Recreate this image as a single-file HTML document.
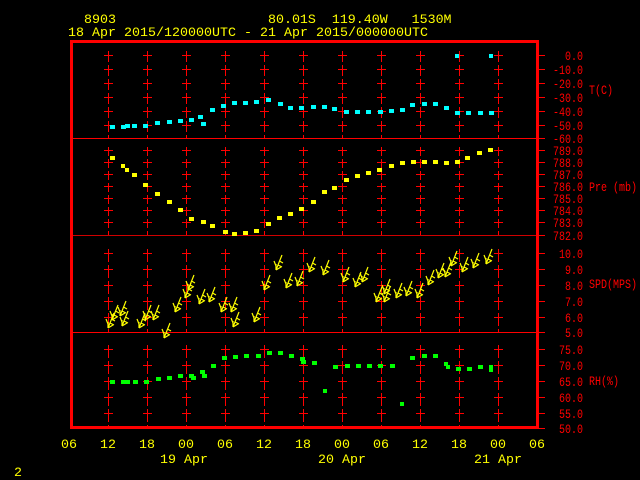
<!DOCTYPE html>
<html><head><meta charset="utf-8"><style>
html,body{margin:0;padding:0;background:#000;}
svg{display:block}
text{font-family:"Liberation Mono",monospace;font-size:13.3px}
.s{font-size:13px}
</style></head><body>
<svg width="640" height="480" viewBox="0 0 640 480" xmlns="http://www.w3.org/2000/svg">
<defs>
<g id="b" stroke="#ffff00" stroke-width="1.2" fill="none">
<path d="M0,0 L6,-15 M0,0 L0,-6 M0,0 L5,-3 M2,-5 L6,-3 M3.5,-9 L7,-7 M0,-4 L-2,-9"/>
</g>
<g id="vl">
<path d="M108.5,51V138" stroke-dasharray="11 3"/>
<path d="M108.5,147V235" stroke-dasharray="9 3"/>
<path d="M108.5,249V332" stroke-dasharray="13 3"/>
<path d="M108.5,345V427" stroke-dasharray="13 3"/>
</g>
</defs>
<g fill="#ffff00">
<text x="84" y="23">8903</text>
<text x="268" y="23" xml:space="preserve">80.01S  119.40W   1530M</text>
<text x="68" y="36" textLength="360" xml:space="preserve">18 Apr 2015/120000UTC - 21 Apr 2015/000000UTC</text>
<g text-anchor="middle">
<text x="69" y="448">06</text><text x="108" y="448">12</text><text x="147" y="448">18</text><text x="186" y="448">00</text><text x="225" y="448">06</text><text x="264" y="448">12</text><text x="303" y="448">18</text><text x="342" y="448">00</text><text x="381" y="448">06</text><text x="420" y="448">12</text><text x="459" y="448">18</text><text x="498" y="448">00</text><text x="537" y="448">06</text>
<text x="184" y="463">19 Apr</text><text x="342" y="463">20 Apr</text><text x="498" y="463">21 Apr</text>
</g>
<text x="14" y="476">2</text>
</g>
<g stroke="#ff0000" stroke-width="1">
<use href="#vl"/><use href="#vl" x="39"/><use href="#vl" x="78"/><use href="#vl" x="117"/><use href="#vl" x="156"/><use href="#vl" x="195"/><use href="#vl" x="234"/><use href="#vl" x="273"/><use href="#vl" x="312"/><use href="#vl" x="351"/><use href="#vl" x="390"/>
<path id="hx" d="M104,55.5h9M104,69.5h9M104,83.5h9M104,97.5h9M104,111.5h9M104,125.5h9M104,150.5h9M104,162.5h9M104,174.5h9M104,186.5h9M104,198.5h9M104,210.5h9M104,222.5h9M104,253.5h9M104,269.5h9M104,285.5h9M104,301.5h9M104,317.5h9M104,349.5h9M104,365.5h9M104,381.5h9M104,397.5h9M104,413.5h9"/>
<use href="#hx" x="39"/><use href="#hx" x="78"/><use href="#hx" x="117"/><use href="#hx" x="156"/><use href="#hx" x="195"/><use href="#hx" x="234"/><use href="#hx" x="273"/><use href="#hx" x="312"/><use href="#hx" x="351"/><use href="#hx" x="390"/>
<path d="M537,55.5h8M537,69.5h8M537,83.5h8M537,97.5h8M537,111.5h8M537,125.5h8M537,138.5h8M537,150.5h8M537,162.5h8M537,174.5h8M537,186.5h8M537,198.5h8M537,210.5h8M537,222.5h8M537,235.5h8M537,253.5h8M537,269.5h8M537,285.5h8M537,301.5h8M537,317.5h8M537,332.5h8M537,349.5h8M537,365.5h8M537,381.5h8M537,397.5h8M537,413.5h8M537,428.5h8"/>
<path d="M72,138.5H538M72,332.5H538"/>
<path d="M72,235.5H538" stroke="#d00000"/>
</g>
<rect x="71.5" y="41.5" width="466" height="386" fill="none" stroke="#ff0000" stroke-width="3"/>
<g fill="#ff0000" text-anchor="end">
<text class="s" x="583" y="60" textLength="18" lengthAdjust="spacingAndGlyphs">0.0</text><text class="s" x="583" y="74" textLength="30" lengthAdjust="spacingAndGlyphs">-10.0</text><text class="s" x="583" y="88" textLength="30" lengthAdjust="spacingAndGlyphs">-20.0</text><text class="s" x="583" y="102" textLength="30" lengthAdjust="spacingAndGlyphs">-30.0</text><text class="s" x="583" y="116" textLength="30" lengthAdjust="spacingAndGlyphs">-40.0</text><text class="s" x="583" y="130" textLength="30" lengthAdjust="spacingAndGlyphs">-50.0</text><text class="s" x="583" y="143" textLength="30" lengthAdjust="spacingAndGlyphs">-60.0</text>
<text class="s" x="583" y="155" textLength="30" lengthAdjust="spacingAndGlyphs">789.0</text><text class="s" x="583" y="167" textLength="30" lengthAdjust="spacingAndGlyphs">788.0</text><text class="s" x="583" y="179" textLength="30" lengthAdjust="spacingAndGlyphs">787.0</text><text class="s" x="583" y="191" textLength="30" lengthAdjust="spacingAndGlyphs">786.0</text><text class="s" x="583" y="203" textLength="30" lengthAdjust="spacingAndGlyphs">785.0</text><text class="s" x="583" y="215" textLength="30" lengthAdjust="spacingAndGlyphs">784.0</text><text class="s" x="583" y="227" textLength="30" lengthAdjust="spacingAndGlyphs">783.0</text><text class="s" x="583" y="240" textLength="30" lengthAdjust="spacingAndGlyphs">782.0</text>
<text class="s" x="583" y="258" textLength="24" lengthAdjust="spacingAndGlyphs">10.0</text><text class="s" x="583" y="274" textLength="18" lengthAdjust="spacingAndGlyphs">9.0</text><text class="s" x="583" y="290" textLength="18" lengthAdjust="spacingAndGlyphs">8.0</text><text class="s" x="583" y="306" textLength="18" lengthAdjust="spacingAndGlyphs">7.0</text><text class="s" x="583" y="322" textLength="18" lengthAdjust="spacingAndGlyphs">6.0</text><text class="s" x="583" y="337" textLength="18" lengthAdjust="spacingAndGlyphs">5.0</text>
<text class="s" x="583" y="354" textLength="24" lengthAdjust="spacingAndGlyphs">75.0</text><text class="s" x="583" y="370" textLength="24" lengthAdjust="spacingAndGlyphs">70.0</text><text class="s" x="583" y="386" textLength="24" lengthAdjust="spacingAndGlyphs">65.0</text><text class="s" x="583" y="402" textLength="24" lengthAdjust="spacingAndGlyphs">60.0</text><text class="s" x="583" y="418" textLength="24" lengthAdjust="spacingAndGlyphs">55.0</text><text class="s" x="583" y="433" textLength="24" lengthAdjust="spacingAndGlyphs">50.0</text>
</g>
<g fill="#ff0000">
<text class="s" x="589" y="94" textLength="24" lengthAdjust="spacingAndGlyphs">T(C)</text><text class="s" x="589" y="191" textLength="48" lengthAdjust="spacingAndGlyphs">Pre (mb)</text><text class="s" x="589" y="288" textLength="48" lengthAdjust="spacingAndGlyphs">SPD(MPS)</text><text class="s" x="589" y="385" textLength="30" lengthAdjust="spacingAndGlyphs">RH(%)</text>
</g>
<g fill="#00ffff">
<rect x="110" y="125" width="5" height="4"/><rect x="121" y="125" width="5" height="4"/><rect x="125" y="124" width="5" height="4"/><rect x="132" y="124" width="5" height="4"/><rect x="143" y="124" width="5" height="4"/><rect x="155" y="121" width="5" height="4"/><rect x="167" y="120" width="5" height="4"/><rect x="178" y="119" width="5" height="4"/><rect x="189" y="118" width="5" height="4"/><rect x="198" y="115" width="5" height="4"/><rect x="201" y="122" width="5" height="4"/><rect x="210" y="108" width="5" height="4"/><rect x="221" y="104" width="5" height="4"/><rect x="232" y="101" width="5" height="4"/><rect x="243" y="101" width="5" height="4"/><rect x="254" y="100" width="5" height="4"/><rect x="266" y="98" width="5" height="4"/><rect x="278" y="102" width="5" height="4"/><rect x="288" y="106" width="5" height="4"/><rect x="299" y="106" width="5" height="4"/><rect x="311" y="105" width="5" height="4"/><rect x="322" y="105" width="5" height="4"/><rect x="332" y="107" width="5" height="4"/><rect x="344" y="110" width="5" height="4"/><rect x="355" y="110" width="5" height="4"/><rect x="366" y="110" width="5" height="4"/><rect x="378" y="110" width="5" height="4"/><rect x="389" y="109" width="5" height="4"/><rect x="400" y="108" width="5" height="4"/><rect x="410" y="103" width="5" height="4"/><rect x="422" y="102" width="5" height="4"/><rect x="433" y="102" width="5" height="4"/><rect x="444" y="106" width="5" height="4"/><rect x="455" y="111" width="5" height="4"/><rect x="466" y="111" width="5" height="4"/><rect x="478" y="111" width="5" height="4"/><rect x="489" y="111" width="5" height="4"/><rect x="455" y="54" width="4" height="4"/><rect x="489" y="54" width="4" height="4"/>
</g>
<g fill="#ffff00">
<rect x="110" y="156" width="5" height="4"/><rect x="121" y="164" width="4" height="4"/><rect x="125" y="168" width="4" height="4"/><rect x="132" y="173" width="5" height="4"/><rect x="143" y="183" width="5" height="4"/><rect x="155" y="192" width="5" height="4"/><rect x="167" y="200" width="5" height="4"/><rect x="178" y="208" width="5" height="4"/><rect x="189" y="217" width="5" height="4"/><rect x="201" y="220" width="5" height="4"/><rect x="210" y="224" width="5" height="4"/><rect x="223" y="230" width="5" height="4"/><rect x="232" y="232" width="5" height="4"/><rect x="243" y="231" width="5" height="4"/><rect x="254" y="229" width="5" height="4"/><rect x="266" y="222" width="5" height="4"/><rect x="277" y="216" width="5" height="4"/><rect x="288" y="212" width="5" height="4"/><rect x="299" y="207" width="5" height="4"/><rect x="311" y="200" width="5" height="4"/><rect x="322" y="190" width="5" height="4"/><rect x="332" y="186" width="5" height="4"/><rect x="344" y="178" width="5" height="4"/><rect x="355" y="174" width="5" height="4"/><rect x="366" y="171" width="5" height="4"/><rect x="377" y="168" width="5" height="4"/><rect x="389" y="164" width="5" height="4"/><rect x="400" y="161" width="5" height="4"/><rect x="411" y="160" width="5" height="4"/><rect x="422" y="160" width="5" height="4"/><rect x="433" y="160" width="5" height="4"/><rect x="444" y="161" width="5" height="4"/><rect x="455" y="160" width="5" height="4"/><rect x="465" y="156" width="5" height="4"/><rect x="477" y="151" width="5" height="4"/><rect x="488" y="148" width="5" height="4"/>
</g>
<g>
<use href="#b" x="108" y="328"/><use href="#b" x="112" y="320"/><use href="#b" x="120" y="316"/><use href="#b" x="122" y="326"/><use href="#b" x="139" y="328"/><use href="#b" x="145" y="320"/><use href="#b" x="153" y="320"/><use href="#b" x="164" y="338"/><use href="#b" x="175" y="312"/><use href="#b" x="185" y="298"/><use href="#b" x="188" y="290"/><use href="#b" x="199" y="304"/><use href="#b" x="209" y="302"/><use href="#b" x="221" y="312"/><use href="#b" x="233" y="327"/><use href="#b" x="231" y="312"/><use href="#b" x="254" y="322"/><use href="#b" x="264" y="290"/><use href="#b" x="276" y="270"/><use href="#b" x="286" y="288"/><use href="#b" x="297" y="286"/><use href="#b" x="309" y="272"/><use href="#b" x="323" y="275"/><use href="#b" x="343" y="282"/><use href="#b" x="355" y="287"/><use href="#b" x="362" y="282"/><use href="#b" x="376" y="302"/><use href="#b" x="384" y="302"/><use href="#b" x="384" y="294"/><use href="#b" x="396" y="298"/><use href="#b" x="406" y="296"/><use href="#b" x="417" y="298"/><use href="#b" x="428" y="285"/><use href="#b" x="438" y="278"/><use href="#b" x="445" y="277"/><use href="#b" x="451" y="266"/><use href="#b" x="462" y="272"/><use href="#b" x="473" y="268"/><use href="#b" x="486" y="264"/>
</g>
<g fill="#00ff00">
<rect x="110" y="380" width="5" height="4"/><rect x="121" y="380" width="5" height="4"/><rect x="125" y="380" width="5" height="4"/><rect x="133" y="380" width="5" height="4"/><rect x="144" y="380" width="5" height="4"/><rect x="156" y="377" width="5" height="4"/><rect x="167" y="376" width="5" height="4"/><rect x="178" y="374" width="5" height="4"/><rect x="189" y="374" width="5" height="4"/><rect x="191" y="376" width="5" height="4"/><rect x="200" y="370" width="5" height="4"/><rect x="202" y="374" width="5" height="4"/><rect x="211" y="364" width="5" height="4"/><rect x="222" y="356" width="5" height="4"/><rect x="233" y="355" width="5" height="4"/><rect x="244" y="354" width="5" height="4"/><rect x="256" y="354" width="5" height="4"/><rect x="267" y="351" width="5" height="4"/><rect x="278" y="351" width="5" height="4"/><rect x="289" y="354" width="5" height="4"/><rect x="300" y="357" width="5" height="4"/><rect x="301" y="360" width="5" height="4"/><rect x="312" y="361" width="5" height="4"/><rect x="323" y="389" width="4" height="4"/><rect x="333" y="365" width="5" height="4"/><rect x="345" y="364" width="5" height="4"/><rect x="356" y="364" width="5" height="4"/><rect x="367" y="364" width="5" height="4"/><rect x="378" y="364" width="5" height="4"/><rect x="390" y="364" width="5" height="4"/><rect x="400" y="402" width="4" height="4"/><rect x="410" y="356" width="5" height="4"/><rect x="422" y="354" width="5" height="4"/><rect x="433" y="354" width="5" height="4"/><rect x="444" y="362" width="4" height="4"/><rect x="446" y="365" width="4" height="4"/><rect x="456" y="367" width="5" height="4"/><rect x="467" y="367" width="5" height="4"/><rect x="478" y="365" width="5" height="4"/><rect x="489" y="365" width="4" height="4"/><rect x="489" y="368" width="4" height="4"/>
</g>
</svg>
</body></html>
